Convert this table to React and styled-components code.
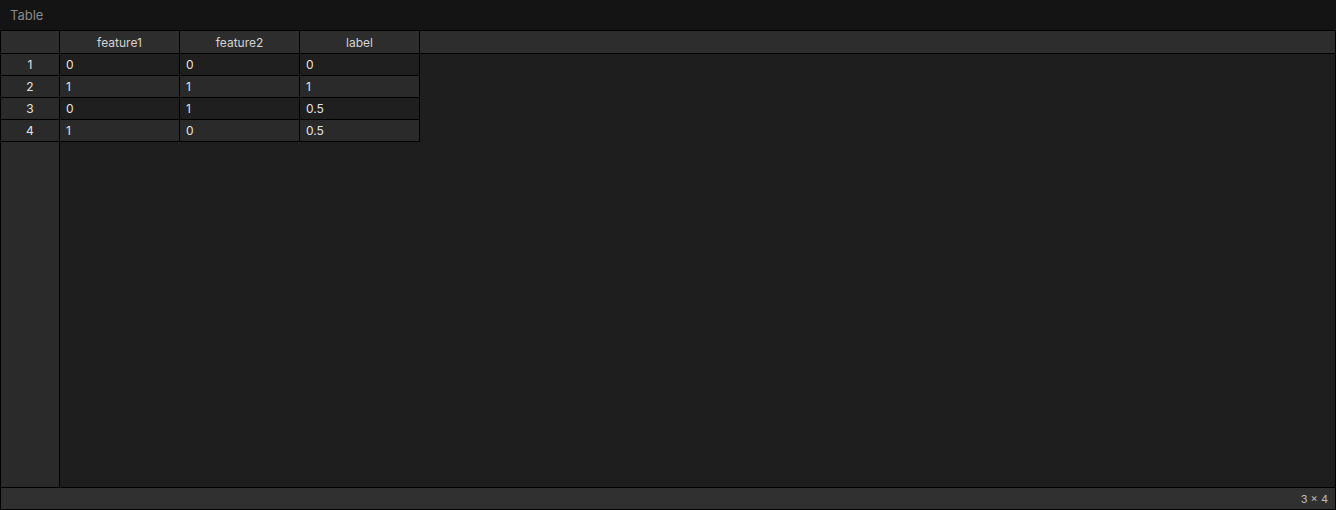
import React from 'react'
import styled, { createGlobalStyle } from 'styled-components'

const GlobalStyle = createGlobalStyle`
  html, body {
    margin: 0;
    padding: 0;
    background: #141414;
  }
  body {
    font-family: Inter, 'Noto Sans', sans-serif;
  }
`

const Page = styled.div`
  width: 1336px;
  height: 510px;
  display: flex;
  flex-direction: column;
  background: #141414;
  overflow: hidden;
`

const TitleBar = styled.div`
  height: 30px;
  flex: none;
  display: flex;
  align-items: center;
  padding-left: 10px;
  font-size: 13px;
  color: #8a8a8a;
`

const Sheet = styled.div`
  flex: 1;
  min-height: 0;
  display: flex;
  flex-direction: column;
  border: 1px solid #000;
  background: #1e1e1e;
`

const HeaderRow = styled.div`
  height: 22px;
  flex: none;
  display: flex;
  background: #2d2d2d;
  border-bottom: 1px solid #000;
`

const Corner = styled.div`
  width: 58px;
  flex: none;
  border-right: 1px solid #000;
`

const HeaderCell = styled.div`
  width: 120px;
  box-sizing: border-box;
  flex: none;
  border-right: 1px solid #000;
  display: flex;
  align-items: center;
  justify-content: center;
  font-size: 12px;
  color: #d4d4d4;
`

const Body = styled.div`
  flex: 1;
  min-height: 0;
  display: flex;
`

const IndexColumn = styled.div`
  width: 58px;
  flex: none;
  background: #2a2a2a;
  border-right: 1px solid #000;
`

const IndexCell = styled.div`
  height: 21px;
  border-bottom: 1px solid #000;
  display: flex;
  align-items: center;
  justify-content: center;
  font-size: 12px;
  color: #e2e2e2;
`

const Rows = styled.div`
  display: flex;
  flex-direction: column;
`

const Row = styled.div`
  display: flex;
  height: 21px;
  border-bottom: 1px solid #000;
  background: ${p => (p.$even ? '#2a2a2a' : '#1f1f1f')};
`

const Cell = styled.div`
  width: 120px;
  flex: none;
  border-right: 1px solid #000;
  display: flex;
  align-items: center;
  padding-left: 6px;
  box-sizing: border-box;
  font-size: 12px;
  color: #e2e2e2;
`

const Footer = styled.div`
  height: 21px;
  flex: none;
  border-top: 1px solid #000;
  background: #303030;
  display: flex;
  align-items: center;
  justify-content: flex-end;
  padding-right: 7px;
  font-size: 11px;
  color: #bdbdbd;
`

const columns = ['feature1', 'feature2', 'label']
const data = [
  ['0', '0', '0'],
  ['1', '1', '1'],
  ['0', '1', '0.5'],
  ['1', '0', '0.5'],
]

export default function App() {
  return (
    <>
      <GlobalStyle />
      <Page>
        <TitleBar>Table</TitleBar>
        <Sheet>
          <HeaderRow>
            <Corner />
            {columns.map(c => (
              <HeaderCell key={c}>{c}</HeaderCell>
            ))}
          </HeaderRow>
          <Body>
            <IndexColumn>
              {data.map((_, i) => (
                <IndexCell key={i}>{i + 1}</IndexCell>
              ))}
            </IndexColumn>
            <Rows>
              {data.map((row, i) => (
                <Row key={i} $even={i % 2 === 1}>
                  {row.map((v, j) => (
                    <Cell key={j}>{v}</Cell>
                  ))}
                </Row>
              ))}
            </Rows>
          </Body>
          <Footer>
            {columns.length} × {data.length}
          </Footer>
        </Sheet>
      </Page>
    </>
  )
}
